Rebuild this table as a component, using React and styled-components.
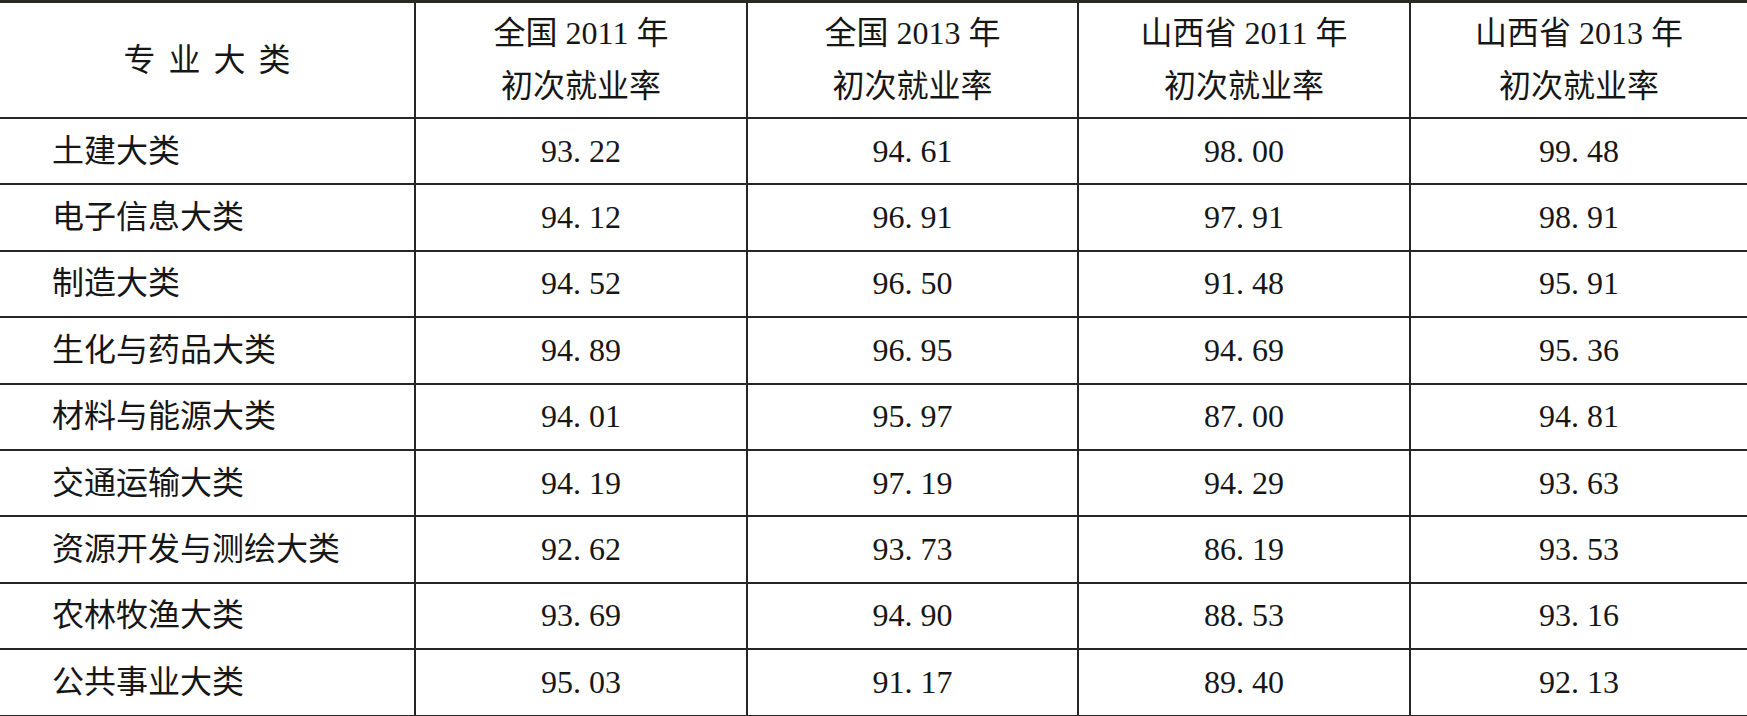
import React from "react";
import styled, { createGlobalStyle } from "styled-components";

const GlobalStyle = createGlobalStyle`
  html, body {
    margin: 0;
    padding: 0;
    background: #fff;
  }
  body {
    font-family: "Liberation Serif", "Noto Sans CJK SC", serif;
    color: #161616;
  }
`;

const headers = [
  ["全国 2011 年", "初次就业率"],
  ["全国 2013 年", "初次就业率"],
  ["山西省 2011 年", "初次就业率"],
  ["山西省 2013 年", "初次就业率"],
];

const rows = [
  ["土建大类", "93.22", "94.61", "98.00", "99.48"],
  ["电子信息大类", "94.12", "96.91", "97.91", "98.91"],
  ["制造大类", "94.52", "96.50", "91.48", "95.91"],
  ["生化与药品大类", "94.89", "96.95", "94.69", "95.36"],
  ["材料与能源大类", "94.01", "95.97", "87.00", "94.81"],
  ["交通运输大类", "94.19", "97.19", "94.29", "93.63"],
  ["资源开发与测绘大类", "92.62", "93.73", "86.19", "93.53"],
  ["农林牧渔大类", "93.69", "94.90", "88.53", "93.16"],
  ["公共事业大类", "95.03", "91.17", "89.40", "92.13"],
];

const Grid = styled.div`
  display: grid;
  grid-template-columns: 414px 332px 331px 332px 1fr;
  grid-template-rows: 116px;
  grid-auto-rows: 66.4px;
  width: 1747px;
  border-top: 3px solid #2b2a22;
  font-size: 32px;
`;

const Cell = styled.div`
  display: flex;
  flex-direction: column;
  justify-content: center;
  align-items: ${(p) => (p.$left ? "flex-start" : "center")};
  padding-left: ${(p) => (p.$left ? "52px" : "0")};
  border-bottom: 2px solid #262626;
  border-left: ${(p) => (p.$first ? "none" : "2px solid #262626")};
  box-sizing: border-box;
  line-height: 53px;
  white-space: nowrap;
`;

const Spaced = styled.span`
  word-spacing: 5px;
`;

const Dot = styled.span`
  margin-right: 8px;
`;

const Num = ({ value }) => {
  const [a, b] = value.split(".");
  return (
    <span>
      {a}
      <Dot>.</Dot>
      {b}
    </span>
  );
};

export default function App() {
  return (
    <>
      <GlobalStyle />
      <Grid>
        <Cell $first>
          <Spaced>专 业 大 类</Spaced>
        </Cell>
        {headers.map((h, i) => (
          <Cell key={i}>
            <span>{h[0]}</span>
            <span>{h[1]}</span>
          </Cell>
        ))}
        {rows.map((r, i) => (
          <React.Fragment key={i}>
            <Cell $first $left>
              {r[0]}
            </Cell>
            {r.slice(1).map((v, j) => (
              <Cell key={j}>
                <Num value={v} />
              </Cell>
            ))}
          </React.Fragment>
        ))}
      </Grid>
    </>
  );
}
